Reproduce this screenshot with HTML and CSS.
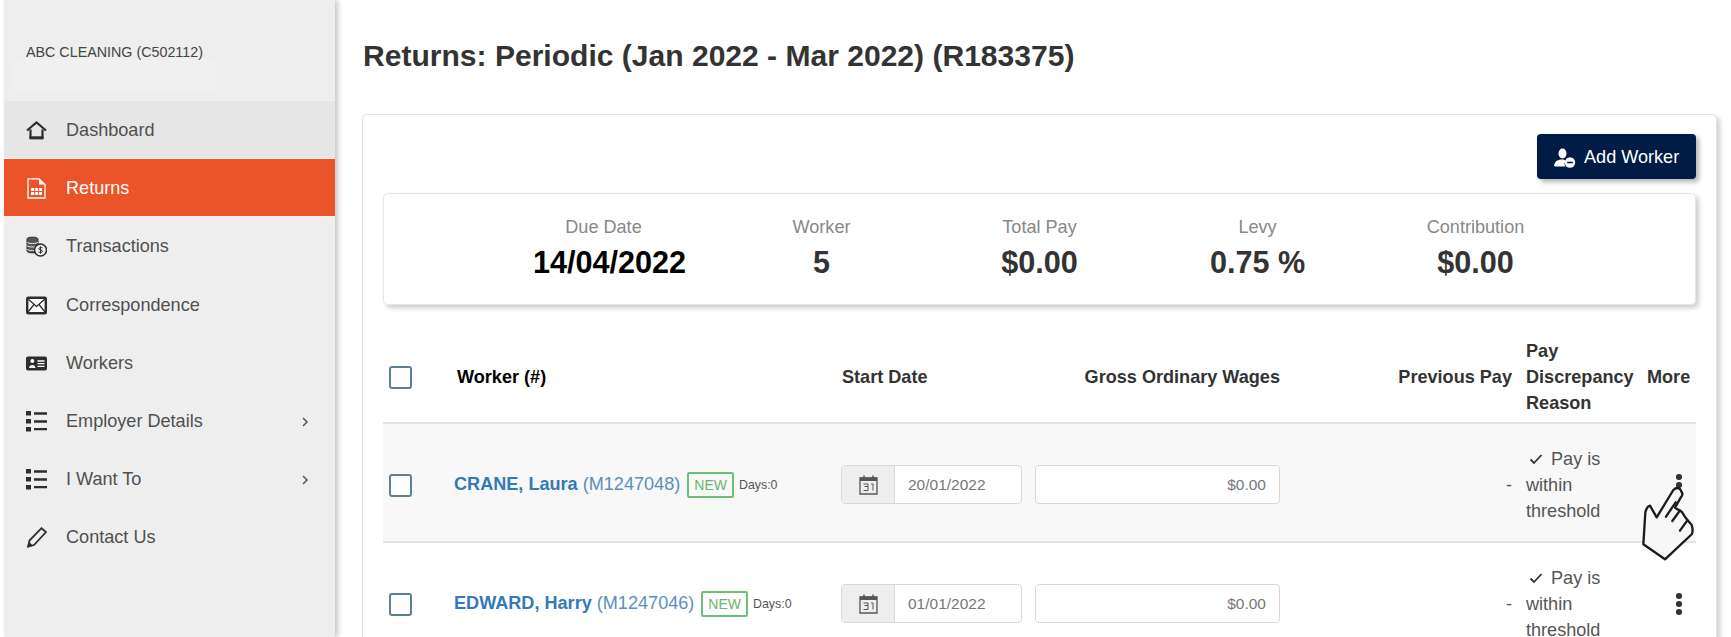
FILE: index.html
```html
<!DOCTYPE html>
<html lang="en">
<head>
  <meta charset="UTF-8">
  <meta name="viewport" content="width=device-width, initial-scale=1.0">
  <title>Returns</title>
  <link rel="stylesheet" href="styles.css">
</head>
<body>
  <aside class="sidebar">
    <div class="account">
      <div class="account-name">ABC CLEANING (C502112)</div>
      <div class="account-logo"></div>
    </div>
    <nav>
      <a class="nav-item hovered">
        <svg class="nav-icon" viewBox="0 0 21 21"><path d="M1 10.500 10.500 2.500 20 10.500" fill="none" stroke="#2d2d2d" stroke-width="2.200"/><path d="M4.500 9.500V17.500H16.500V9.500" fill="none" stroke="#2d2d2d" stroke-width="2.200"/><path d="M3.500 18H17.500" stroke="#2d2d2d" stroke-width="2.800"/></svg>
        Dashboard
      </a>
      <a class="nav-item active">
        <svg class="nav-icon" viewBox="0 0 21 21"><path d="M2 .8H13L19 6.500V20H2Z" fill="none" stroke="#fff" stroke-width="1.300"/><path d="M13 1V6.500H19" fill="#fff"/><path d="M5 10H16V17H5Z" fill="#fff"/><path d="M8.700 10V17M12.300 10V17M5 13.500H16" stroke="#eb5428" stroke-width="1"/></svg>
        Returns
      </a>
      <a class="nav-item">
        <svg class="nav-icon" viewBox="0 0 21 21"><path d="M1 3C1 .5 12 .5 12 3V15C12 17.500 1 17.500 1 15Z" fill="#555" stroke="#2d2d2d"/><path d="M1 6C1 8 12 8 12 6M1 9.500C1 11.500 12 11.500 12 9.500M1 13C1 15 12 15 12 13" fill="none" stroke="#eee" stroke-width="1"/><circle cx="14.500" cy="14" r="6" fill="#eee" stroke="#2d2d2d" stroke-width="1.500"/><path d="M16.500 12C15.500 11 12.800 11.300 12.800 12.800 12.800 14.500 16.500 13.500 16.500 15.300 16.500 16.800 13.500 16.900 12.500 15.900M14.500 10.300V17.700" fill="none" stroke="#2d2d2d"/></svg>
        Transactions
      </a>
      <a class="nav-item">
        <svg class="nav-icon" viewBox="0 0 21 21"><rect x="1.200" y="2.700" width="18.600" height="15.600" rx="1" fill="#fff" stroke="#2d2d2d" stroke-width="2.400"/><path d="M2 4 10.500 11.500 19 4M2 17 8 9.500M19 17 13 9.500" fill="none" stroke="#2d2d2d" stroke-width="1.300"/></svg>
        Correspondence
      </a>
      <a class="nav-item">
        <svg class="nav-icon" viewBox="0 0 21 21"><rect x="0" y="3.500" width="21" height="14" rx="2" fill="#2d2d2d"/><circle cx="6.300" cy="8" r="2" fill="#fff"/><path d="M3 15C3 11 9.500 11 9.500 15Z" fill="#fff"/><path d="M11.500 8H18.500M11.500 10.700H18.500M11.500 13.400H18.500" stroke="#fff" stroke-width="1.300"/></svg>
        Workers
      </a>
      <a class="nav-item">
        <svg class="nav-icon" viewBox="0 0 21 21"><path d="M0 0H5V4.500H0ZM0 8H5V12.500H0ZM0 16H5V20.500H0Z" fill="#2d2d2d"/><path d="M8 2.500H21M8 10.500H21M8 18.200H21" stroke="#2d2d2d" stroke-width="2.300"/></svg>
        Employer Details
        <svg class="chevron" viewBox="0 0 8 12"><path d="M2 2 6 6 2 10" fill="none" stroke="#555" stroke-width="1.500"/></svg>
      </a>
      <a class="nav-item">
        <svg class="nav-icon" viewBox="0 0 21 21"><path d="M0 0H5V4.500H0ZM0 8H5V12.500H0ZM0 16H5V20.500H0Z" fill="#2d2d2d"/><path d="M8 2.500H21M8 10.500H21M8 18.200H21" stroke="#2d2d2d" stroke-width="2.300"/></svg>
        I Want To
        <svg class="chevron" viewBox="0 0 8 12"><path d="M2 2 6 6 2 10" fill="none" stroke="#555" stroke-width="1.500"/></svg>
      </a>
      <a class="nav-item">
        <svg class="nav-icon" viewBox="0 0 21 21"><path d="M15.500 1.200 20 5 8 18 2.500 19.500 3.500 13.500Z" fill="none" stroke="#2d2d2d" stroke-width="1.800"/><path d="M.8 20.500 2.500 14.500 7 18.500Z" fill="#2d2d2d"/></svg>
        Contact Us
      </a>
    </nav>
  </aside>

  <main class="content">
    <h1 class="page-title">Returns: Periodic (Jan 2022 - Mar 2022) (R183375)</h1>

    <section class="panel">
      <div class="toolbar">
        <button class="btn-add">
          <svg class="btn-icon" viewBox="0 0 22 20"><ellipse cx="8.500" cy="5.500" rx="4" ry="5" fill="#fff"/><path d="M0 17.500C1 13 4 11.500 8.500 11.500 10 11.500 11 12 11.500 13 10 15 10.500 17 11.500 18.500H1Z" fill="#fff"/><circle cx="16" cy="14.500" r="5.200" fill="#fff"/><path d="M13.200 14.500H18.800" stroke="#001c44" stroke-width="1.600"/></svg>
          Add Worker
        </button>
      </div>

      <div class="summary">
        <div class="stat"><div class="stat-label">Due Date</div><div class="stat-value due">14/04/2022</div></div>
        <div class="stat"><div class="stat-label">Worker</div><div class="stat-value">5</div></div>
        <div class="stat"><div class="stat-label">Total Pay</div><div class="stat-value">$0.00</div></div>
        <div class="stat"><div class="stat-label">Levy</div><div class="stat-value">0.75 %</div></div>
        <div class="stat"><div class="stat-label">Contribution</div><div class="stat-value">$0.00</div></div>
      </div>

      <div class="table">
        <div class="row head">
          <div><span class="check"></span></div>
          <div class="col-worker">Worker (#)</div>
          <div class="col-start">Start Date</div>
          <div class="right">Gross Ordinary Wages</div>
          <div class="right">Previous Pay</div>
          <div class="reason">Pay Discrepancy Reason</div>
          <div>More</div>
        </div>

        <div class="row shaded">
          <div><span class="check"></span></div>
          <div class="worker">
            <a class="worker-name"><b>CRANE, Laura</b> (M1247048)</a>
            <span class="badge">NEW</span>
            <span class="days">Days:0</span>
          </div>
          <div>
            <div class="date-group">
              <span class="addon">
                <svg class="cal" viewBox="0 0 19 20"><path d="M1 3H18V19H1Z" fill="none" stroke="#555" stroke-width="1.300"/><path d="M1 2.500H18V6H1Z" fill="#555"/><path d="M5 .5V4M14 .5V4" stroke="#555" stroke-width="1.500"/><path d="M4.500 9H9V11.500H5.500M9 11.500V15.500H4.500M12 9H14V15.500" fill="none" stroke="#555" stroke-width="1"/></svg>
              </span>
              <span class="date-value">20/01/2022</span>
            </div>
          </div>
          <div class="money">$0.00</div>
          <div class="right prev">-</div>
          <div class="reason reason-text"><svg class="tick" viewBox="0 0 14 12"><path d="M1.500 6.500 5 10 12.500 2" fill="none" stroke="#333" stroke-width="1.800"/></svg>Pay is within threshold</div>
          <div class="more"><span class="kebab"><i></i><i></i><i></i></span></div>
        </div>

        <div class="row">
          <div><span class="check"></span></div>
          <div class="worker">
            <a class="worker-name"><b>EDWARD, Harry</b> (M1247046)</a>
            <span class="badge">NEW</span>
            <span class="days">Days:0</span>
          </div>
          <div>
            <div class="date-group">
              <span class="addon">
                <svg class="cal" viewBox="0 0 19 20"><path d="M1 3H18V19H1Z" fill="none" stroke="#555" stroke-width="1.300"/><path d="M1 2.500H18V6H1Z" fill="#555"/><path d="M5 .5V4M14 .5V4" stroke="#555" stroke-width="1.500"/><path d="M4.500 9H9V11.500H5.500M9 11.500V15.500H4.500M12 9H14V15.500" fill="none" stroke="#555" stroke-width="1"/></svg>
              </span>
              <span class="date-value">01/01/2022</span>
            </div>
          </div>
          <div class="money">$0.00</div>
          <div class="right prev">-</div>
          <div class="reason reason-text"><svg class="tick" viewBox="0 0 14 12"><path d="M1.500 6.500 5 10 12.500 2" fill="none" stroke="#333" stroke-width="1.800"/></svg>Pay is within threshold</div>
          <div class="more"><span class="kebab"><i></i><i></i><i></i></span></div>
        </div>
      </div>
    </section>
  </main>

  <!-- pointer drawn over the first row's menu -->
  <svg class="hand" viewBox="0 0 225 315">
    <path d="M40 238 46 142Q50 125 60 122L80 157 130 75Q140 65 150 72L157 85Q158 92 152 98L135 128 155 140 168 160 185 180Q190 195 186 207L105 283Z" fill="#f7f7f7" stroke="#1c1c1c" stroke-width="7" stroke-linejoin="round"/>
    <path d="M108 155 137 112M127 168 150 136M150 197 172 166" fill="none" stroke="#1c1c1c" stroke-width="7" stroke-linecap="round"/>
  </svg>
</body>
</html>
```

FILE: styles.css
```css
* {
  box-sizing: border-box;
}
html, body {
  height: 637px;
  overflow: hidden;
}
body {
  margin: 0;
  display: flex;
  font-family: "Liberation Sans", Arial, sans-serif;
  background: #fff;
  color: #333;
}

/* sidebar */
.sidebar {
  width: 331px;
  margin-left: 4px;
  flex: none;
  background: #eee;
  box-shadow: 3px 0 5px rgba(0,0,0,0.22);
}
.account {
  height: 101px;
  padding-top: 45px;
}
.account-name {
  margin-left: 22px;
  font-size: 14.3px;
  line-height: 14px;
  color: #444;
}
.account-logo {
  width: 204px;
  height: 33px;
  margin-left: 9px;
  background: #f0f0f0;
}
.nav-item {
  display: flex;
  align-items: center;
  height: 58.2px;
  padding: 1px 26px 0 22px;
  font-size: 18.1px;
  color: #505050;
}
.nav-item.hovered {
  background: #e6e6e6;
  border-bottom: 1px solid #f2f2f2;
}
.nav-item.active {
  background: #eb5428;
  color: #fff;
  border-bottom: 1px solid #f2f2f2;
}
.nav-icon {
  width: 21px;
  height: 21px;
  margin-right: 19px;
  flex: none;
}
.chevron {
  width: 8px;
  height: 12px;
  margin-left: auto;
}

/* main */
.content {
  flex: 1;
  min-width: 0;
  padding: 0 14px 0 28px;
}
.page-title {
  margin: 0;
  height: 114px;
  padding-top: 40px;
  font-size: 30.05px;
  line-height: 32px;
  font-weight: bold;
  color: #333;
}
.panel {
  height: 600px;
  margin-left: -1px;
  padding: 19px 20px 0 20px;
  background: #fff;
  border: 1px solid #e2e2e2;
  border-radius: 5px;
  box-shadow: 3px 3px 5px rgba(0,0,0,0.2);
}
.toolbar {
  display: flex;
  justify-content: flex-end;
}
.btn-add {
  display: flex;
  align-items: center;
  width: 159px;
  height: 45px;
  padding: 2px 0 0 17px;
  border: none;
  border-radius: 4px;
  background: #001c44;
  color: #fff;
  font-family: inherit;
  font-size: 18.1px;
  box-shadow: 3px 3px 5px rgba(0,0,0,0.3);
}
.btn-icon {
  width: 22px;
  height: 20px;
  margin-right: 8px;
}

.summary {
  display: flex;
  justify-content: center;
  height: 112px;
  margin-top: 14px;
  padding-top: 21px;
  border: 1px solid #e6e6e6;
  border-radius: 5px;
  box-shadow: 3px 3px 5px rgba(0,0,0,0.2);
}
.stat {
  width: 218px;
  text-align: center;
}
.stat-label {
  font-size: 18.1px;
  line-height: 24px;
  color: #888;
}
.stat-value {
  margin-top: 5px;
  font-size: 30.6px;
  line-height: 36px;
  font-weight: bold;
  color: #333;
}
.stat-value.due {
  margin-left: 12px;
  color: #000;
}

/* table */
.table {
  margin-top: 29px;
}
.row {
  display: grid;
  grid-template-columns: 71px 387px 194px 245px 232px 135px 1fr;
  align-items: center;
  padding: 22px 0 17px;
  border-bottom: 2px solid #e3e3e3;
  font-size: 18.1px;
  line-height: 26px;
}
.row.head {
  padding: 4px 0 6px;
  font-weight: bold;
}
.row.shaded {
  background: #f8f8f8;
}
.col-worker {
  margin-left: 3px;
  color: #000;
}
.col-start {
  margin-left: 1px;
}
.check {
  display: block;
  width: 23px;
  height: 23px;
  margin: 1px 0 0 6px;
  background: #fff;
  border: 2.5px solid #5f8093;
  border-radius: 3px;
}
.right {
  text-align: right;
}
.reason {
  padding-left: 14px;
}
.reason-text {
  max-width: 110px;
  color: #555;
}
.tick {
  width: 14px;
  height: 12px;
  margin: 0 8px 0 3px;
}
.prev {
  color: #555;
}
.worker {
  display: flex;
  align-items: center;
}
.worker-name {
  margin-top: -2px;
  color: #5b8fbd;
}
.worker-name b {
  color: #337ab7;
}
.badge {
  margin-left: 7px;
  padding: 0 5px;
  height: 26px;
  line-height: 23px;
  border: 2px solid #6dbf76;
  border-radius: 2px;
  font-size: 14px;
  color: #6cb56f;
}
.days {
  margin-left: 5px;
  font-size: 12.4px;
  color: #555;
}
.date-group {
  display: flex;
  width: 181px;
  height: 39px;
  margin-top: -1px;
  background: #fff;
  border: 1.5px solid #d8d8d8;
  border-radius: 4px;
}
.addon {
  display: flex;
  align-items: center;
  justify-content: center;
  width: 53px;
  background: #eee;
  border-right: 1px solid #d8d8d8;
  border-radius: 3px 0 0 3px;
}
.cal {
  width: 19px;
  height: 20px;
}
.date-value {
  padding-left: 13px;
  font-size: 15.5px;
  line-height: 37px;
  color: #777;
}
.money {
  height: 39px;
  margin-top: -1px;
  padding-right: 13px;
  background: #fff;
  border: 1.5px solid #d8d8d8;
  border-radius: 4px;
  text-align: right;
  font-size: 15.5px;
  line-height: 37px;
  color: #777;
}
.more {
  display: flex;
  padding-left: 29px;
}
.kebab {
  display: flex;
  flex-direction: column;
  gap: 2.5px;
}
.kebab i {
  display: block;
  width: 5.5px;
  height: 5.5px;
  border-radius: 50%;
  background: #333;
}

.hand {
  position: absolute;
  left: 1630px;
  top: 465px;
  width: 75px;
  height: 105px;
}
```
